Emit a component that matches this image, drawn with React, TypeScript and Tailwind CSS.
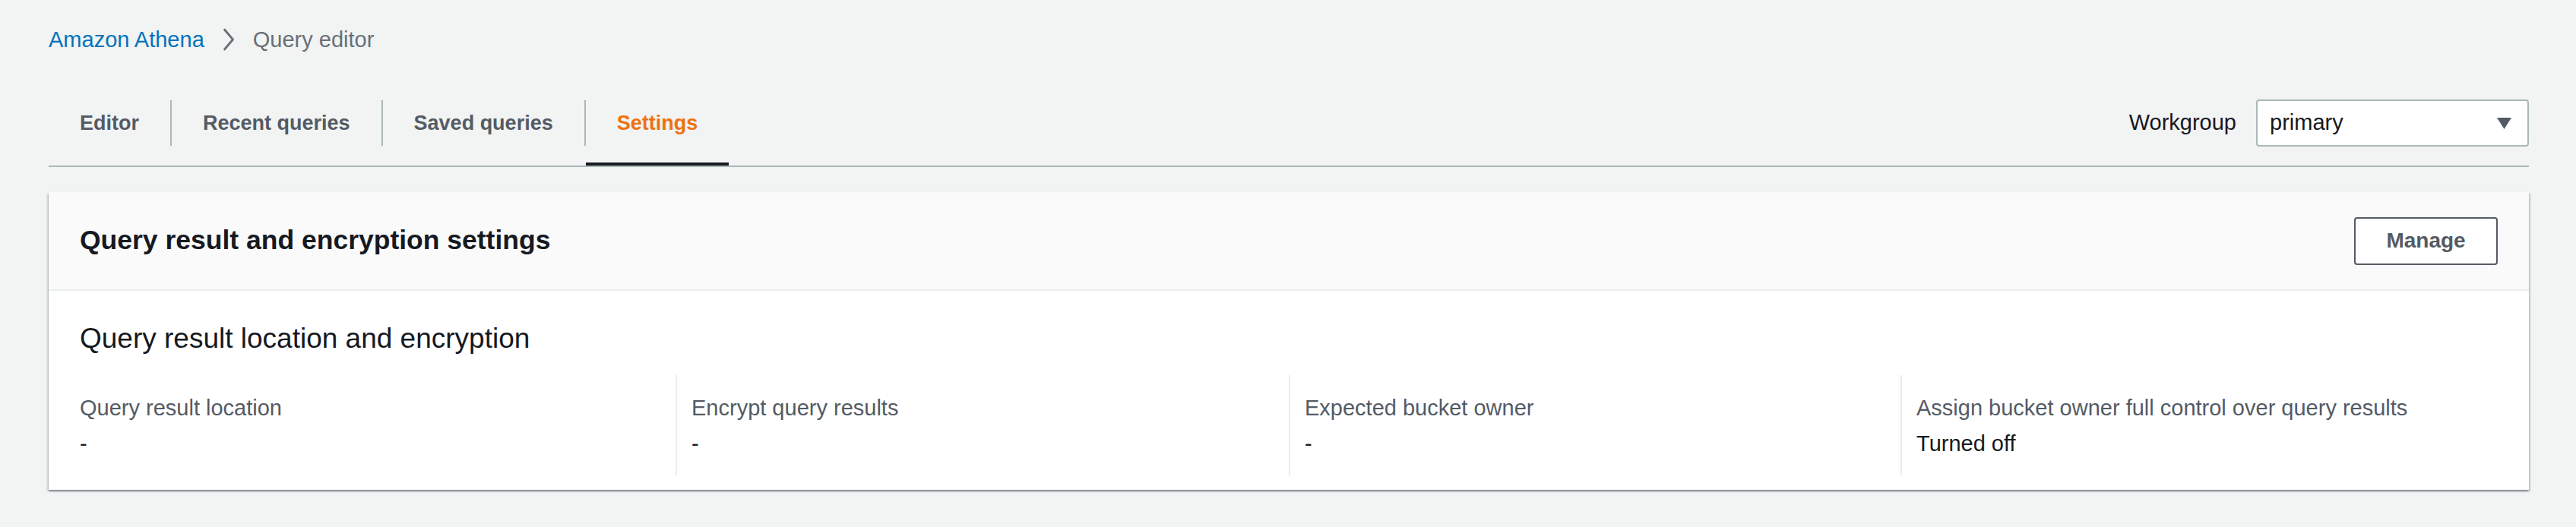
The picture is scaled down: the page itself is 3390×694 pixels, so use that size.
import React from 'react';

const tabs = [
  { label: 'Editor', active: false },
  { label: 'Recent queries', active: false },
  { label: 'Saved queries', active: false },
  { label: 'Settings', active: true },
];

const fields = [
  { label: 'Query result location', value: '-' },
  { label: 'Encrypt query results', value: '-' },
  { label: 'Expected bucket owner', value: '-' },
  { label: 'Assign bucket owner full control over query results', value: 'Turned off' },
];

function Breadcrumbs() {
  return (
    <nav className="flex items-center gap-[24px] text-[29px] leading-[40px]">
      <a className="text-[#0073bb]">Amazon Athena</a>
      <svg width="16" height="30" viewBox="0 0 16 30" fill="none">
        <path d="M2.5 2 L13.5 15 L2.5 28" stroke="#687078" strokeWidth="2.8" strokeLinecap="round" strokeLinejoin="round" />
      </svg>
      <span className="text-[#687078]">Query editor</span>
    </nav>
  );
}

function TabBar() {
  return (
    <div className="mt-[34px] flex items-center justify-between border-b-2 border-[#aab7b8]">
      <div className="flex items-center">
        {tabs.map((tab, i) => (
          <React.Fragment key={tab.label}>
            {i > 0 && <div className="w-[2px] h-[60px] bg-[#aab7b8]" />}
            <button
              className={`h-[112px] px-[41px] pt-[4px] border-b-4 text-[27px] font-bold ${
                tab.active ? 'border-[#16191f] text-[#ec7211]' : 'border-transparent text-[#545b64]'
              }`}
            >
              {tab.label}
            </button>
          </React.Fragment>
        ))}
      </div>
      <div className="flex items-center gap-[26px]">
        <span className="text-[29px] text-[#16191f]">Workgroup</span>
        <div className="w-[359px] h-[62px] flex items-center justify-between bg-white border-2 border-[#aab7b8] rounded-[4px] pl-[16px] pr-[21px]">
          <span className="text-[29px] text-[#16191f]">primary</span>
          <svg width="19" height="15" viewBox="0 0 19 15">
            <polygon points="0,0 19,0 9.5,15" fill="#545b64" />
          </svg>
        </div>
      </div>
    </div>
  );
}

function SettingsCard() {
  return (
    <section className="mt-[33px] bg-white shadow-[0_2px_2px_0_rgba(0,28,36,0.3),2px_2px_2px_0_rgba(0,28,36,0.15),-2px_2px_2px_0_rgba(0,28,36,0.15)]">
      <div className="h-[130px] flex items-center justify-between px-[41px] bg-[#fafafa] border-b-2 border-[#eaeded]">
        <h2 className="text-[35.5px] font-bold text-[#16191f]">Query result and encryption settings</h2>
        <button className="w-[189px] h-[63px] bg-white border-2 border-[#545b64] rounded-[4px] text-[28px] font-bold text-[#545b64]">
          Manage
        </button>
      </div>
      <div className="px-[41px] pt-[39px] pb-[19px]">
        <h3 className="text-[37px] leading-[48px] text-[#16191f]">Query result location and encryption</h3>
        <div className="mt-[24px] grid grid-cols-[784px_807px_805px_1fr]">
          {fields.map((f, i) => (
            <div
              key={f.label}
              className={`pt-[23px] pb-[22px] ${i > 0 ? 'border-l-2 border-[#eaeded] pl-[19px]' : ''}`}
            >
              <div className="text-[29px] leading-[40px] text-[#545b64]">{f.label}</div>
              <div className="mt-[7px] text-[29px] leading-[40px] text-[#16191f]">{f.value}</div>
            </div>
          ))}
        </div>
      </div>
    </section>
  );
}

export default function App() {
  return (
    <div className="w-full h-[694px] bg-[#f2f3f3] pl-[64px] pr-[62px] pt-[32px] font-['Liberation_Sans',Arial,sans-serif]">
      <Breadcrumbs />
      <TabBar />
      <SettingsCard />
    </div>
  );
}
